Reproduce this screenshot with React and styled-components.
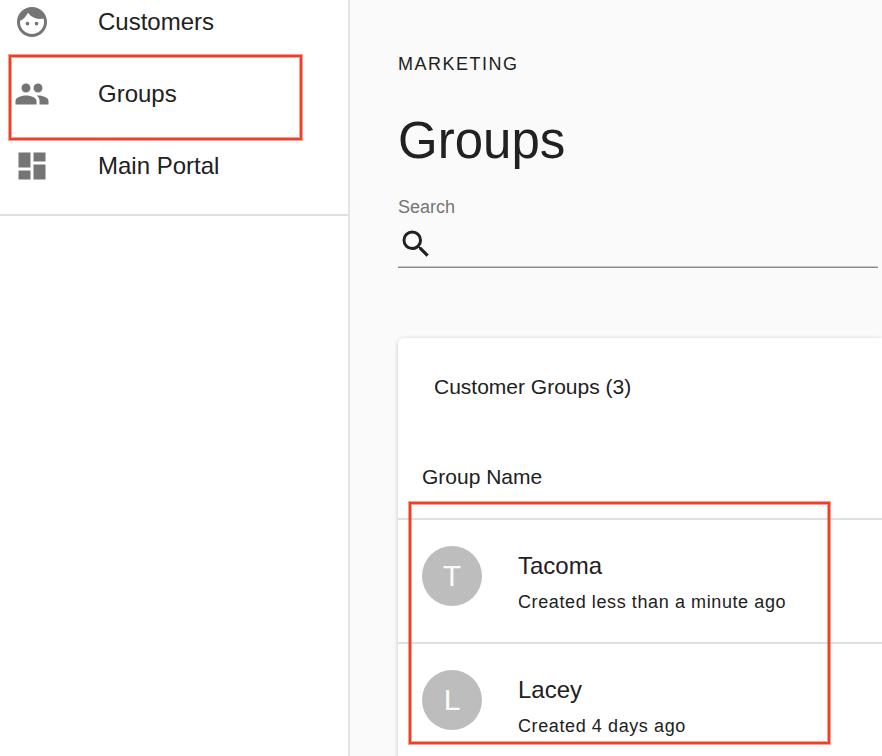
import React from "react";
import styled, { createGlobalStyle } from "styled-components";
import { MdFace, MdPeople, MdDashboard, MdSearch } from "react-icons/md";

const GlobalStyle = createGlobalStyle`
  *, *::before, *::after { box-sizing: border-box; }
  body {
    margin: 0;
    background: #fafafa;
    color: #212121;
    font-family: "Liberation Sans", Helvetica, Arial, sans-serif;
    font-size: 24px;
    line-height: 36px;
  }
`;

const Page = styled.div`
  display: grid;
  grid-template-columns: 350px minmax(0, 1fr);
  height: 100vh;
  overflow: hidden;
`;

const Sidebar = styled.nav`
  background: #fff;
  border-right: 2px solid #e4e4e4;
`;

const NavList = styled.ul`
  list-style: none;
  margin: -14px 0 0;
  padding: 0 0 12px;
  border-bottom: 2px solid #e0e0e0;
`;

const NavItem = styled.li`
  position: relative;
`;

const NavLink = styled.a`
  display: flex;
  align-items: center;
  gap: 48px;
  height: 72px;
  padding: 0 14px;
  color: inherit;
  text-decoration: none;

  svg {
    flex: none;
    color: #757575;
  }
`;

const Highlight = styled.span`
  position: absolute;
  z-index: 1;
  top: ${(p) => p.$top}px;
  left: ${(p) => p.$left}px;
  width: ${(p) => p.$width}px;
  height: ${(p) => p.$height}px;
  border: 2px solid #ee4026;
  box-shadow: 0 0 0 1px #ee402680, inset 0 0 0 1px #ee402680;
  pointer-events: none;
`;

const Main = styled.main`
  padding: 48px 0 0 48px;
`;

const Overline = styled.p`
  margin: 0;
  font-size: 18px;
  line-height: 32px;
  letter-spacing: 0.08333em;
  text-transform: uppercase;
`;

const Title = styled.h1`
  margin: 29px 0 22px;
  font-size: 51px;
  font-weight: 400;
  line-height: 64px;
`;

const SearchField = styled.div`
  display: flex;
  flex-direction: column;
  margin-right: 4px;
`;

const SearchLabel = styled.label`
  margin-bottom: 1px;
  color: #757575;
  font-size: 18px;
  line-height: 24px;
`;

const SearchBox = styled.div`
  display: flex;
  align-items: center;
  height: 48px;
  border-bottom: 1px solid #8c8c8c;
  box-shadow: inset 0 -1px 0 #c6c6c6;

  svg {
    flex: none;
  }
`;

const SearchInput = styled.input`
  flex: 1;
  min-width: 0;
  padding: 0 12px;
  border: 0;
  outline: 0;
  background: none;
  color: inherit;
  font: inherit;
`;

const Card = styled.section`
  margin-top: 70px;
  background: #fff;
  border-radius: 6px 0 0 0;
  box-shadow: 0 1px 4px rgba(0, 0, 0, 0.22);
`;

const CardTitle = styled.h2`
  display: flex;
  align-items: center;
  height: 96px;
  margin: 0;
  padding: 2px 36px 0;
  font-size: 21px;
  font-weight: 400;
`;

const TableArea = styled.div`
  position: relative;
`;

const Table = styled.table`
  width: 100%;
  border-collapse: separate;
  border-spacing: 0;
`;

const HeadCell = styled.th`
  height: 86px;
  padding: 2px 24px 0;
  border-bottom: 2px solid #e0e0e0;
  font-size: 21px;
  font-weight: 400;
  text-align: left;
`;

const Cell = styled.td`
  padding: 26px 24px 22px;
  border-bottom: 2px solid #e0e0e0;
`;

const Group = styled.div`
  display: flex;
  align-items: flex-start;
  gap: 36px;
`;

const Avatar = styled.span`
  display: flex;
  flex: none;
  align-items: center;
  justify-content: center;
  width: 60px;
  height: 60px;
  border-radius: 50%;
  background: #bdbdbd;
  color: #fafafa;
  font-size: 30px;
`;

const GroupText = styled.div`
  display: flex;
  flex-direction: column;
  padding-top: 2px;
`;

const GroupName = styled.span`
  font-size: 24px;
`;

const GroupCreated = styled.span`
  font-size: 18px;
  letter-spacing: 0.03333em;
`;

const navItems = [
  { label: "Customers", icon: MdFace },
  { label: "Groups", icon: MdPeople, highlighted: true },
  { label: "Main Portal", icon: MdDashboard },
];

const groups = [
  { name: "Tacoma", created: "Created less than a minute ago" },
  { name: "Lacey", created: "Created 4 days ago" },
];

export default function App() {
  return (
    <>
      <GlobalStyle />
      <Page>
        <Sidebar>
          <NavList>
            {navItems.map(({ label, icon: Icon, highlighted }) => (
              <NavItem key={label}>
                <NavLink href="#">
                  <Icon size={36} aria-hidden="true" />
                  {label}
                </NavLink>
                {highlighted && (
                  <Highlight $top={-3} $left={9} $width={293} $height={85} />
                )}
              </NavItem>
            ))}
          </NavList>
        </Sidebar>
        <Main>
          <Overline>Marketing</Overline>
          <Title>Groups</Title>
          <SearchField>
            <SearchLabel htmlFor="group-search">Search</SearchLabel>
            <SearchBox>
              <MdSearch size={36} aria-hidden="true" />
              <SearchInput id="group-search" type="text" />
            </SearchBox>
          </SearchField>
          <Card>
            <CardTitle>Customer Groups (3)</CardTitle>
            <TableArea>
              <Table>
                <thead>
                  <tr>
                    <HeadCell scope="col">Group Name</HeadCell>
                  </tr>
                </thead>
                <tbody>
                  {groups.map((group) => (
                    <tr key={group.name}>
                      <Cell>
                        <Group>
                          <Avatar aria-hidden="true">{group.name[0]}</Avatar>
                          <GroupText>
                            <GroupName>{group.name}</GroupName>
                            <GroupCreated>{group.created}</GroupCreated>
                          </GroupText>
                        </Group>
                      </Cell>
                    </tr>
                  ))}
                </tbody>
              </Table>
              <Highlight $top={68} $left={11} $width={421} $height={242} />
            </TableArea>
          </Card>
        </Main>
      </Page>
    </>
  );
}
